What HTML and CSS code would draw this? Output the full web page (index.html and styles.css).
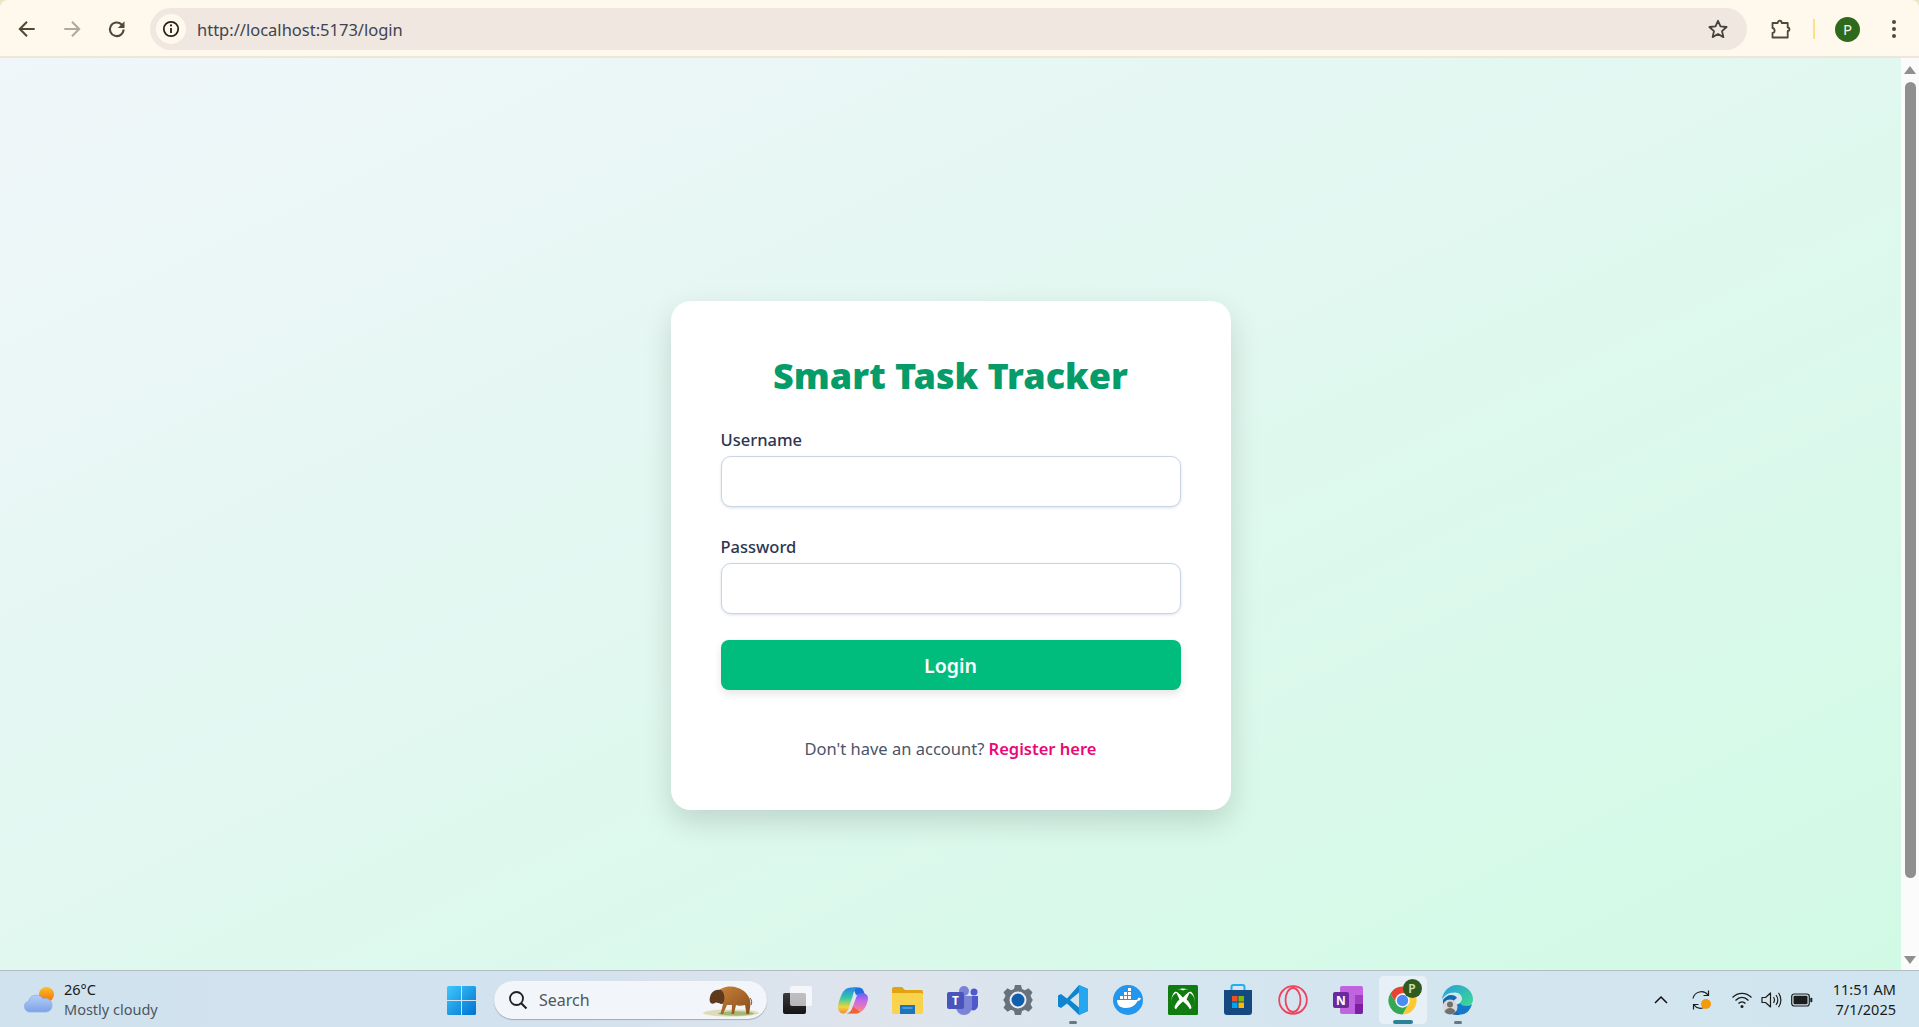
FILE: index.html
```html
<!DOCTYPE html>
<html>
<head>
<title>Smart Task Tracker</title>
<meta charset="utf-8">
<link rel="stylesheet" href="styles.css">
</head>
<body>

<!-- barra del navegador -->
<div class="chrome">
	<div class="nav">
		<svg class="nav-icon" viewBox="0 0 20 20"><path d="M17 10H4M10 3.500 3.500 10l6.500 6.500" fill="none" stroke="#4f4a38" stroke-width="1.900"/></svg>
		<svg class="nav-icon" viewBox="0 0 20 20"><path d="M3 10h13M10 3.500l6.500 6.500-6.500 6.500" fill="none" stroke="#aeaa9c" stroke-width="1.900"/></svg>
		<svg class="nav-icon" viewBox="0 0 20 20"><path d="M16 10.500a6.200 6.200 0 1 1-1.800-4.600L16 7.600" fill="none" stroke="#4f4a38" stroke-width="1.900"/><path d="M16.800 3v6h-6z" fill="#4f4a38"/></svg>
	</div>
	<div class="omnibox">
		<span class="site-chip">
			<svg width="18" height="18" viewBox="0 0 18 18"><circle cx="9" cy="9" r="7.200" fill="none" stroke="#22201a" stroke-width="1.700"/><path d="M9 8v5" stroke="#22201a" stroke-width="1.800"/><circle cx="9" cy="5.400" r="1.100" fill="#22201a"/></svg>
		</span>
		<span class="url">http://localhost:5173/login</span>
		<svg class="star" width="22" height="22" viewBox="0 0 22 22"><path d="M11 2.800l2.500 5.600 6.100.6-4.600 4.100 1.400 6-5.400-3.100-5.400 3.100 1.400-6L2.400 9l6.100-.6z" fill="none" stroke="#45413a" stroke-width="1.800" stroke-linejoin="round"/></svg>
	</div>
	<div class="toolbar">
		<svg width="22" height="22" viewBox="0 0 22 22"><path d="M2.500 5h5.200c0-3 4-3 4 0h6v4.500c2.300 0 2.300 3.500 0 3.500v6.500H2.500v-4.700c2.800 0 2.800-4.800 0-4.800z" fill="none" stroke="#4f4a38" stroke-width="1.800" stroke-linejoin="round"/></svg>
		<span class="toolbar-sep"></span>
		<span class="avatar">P</span>
		<span class="dots"><i></i><i></i><i></i></span>
	</div>
</div>

<div class="viewport">
	<div class="page">
		<div class="card">
			<h1>Smart Task Tracker</h1>
			<form>
				<label for="username">Username</label>
				<input id="username" type="text">
				<label for="password">Password</label>
				<input id="password" class="last-input" type="password">
				<button type="button">Login</button>
			</form>
			<p class="switch">Don't have an account? <a href="#">Register here</a></p>
		</div>
	</div>
	<div class="scrollbar">
		<span class="arrow-up"></span>
		<span class="thumb"></span>
		<span class="arrow-down"></span>
	</div>
</div>

<!-- barra de tareas -->
<div class="taskbar">
	<div class="weather">
		<svg width="32" height="26" viewBox="0 0 32 26">
			<defs>
				<linearGradient id="cloud" x1="0" y1="0" x2="0" y2="1"><stop offset="0" stop-color="#b5cdf5"/><stop offset="1" stop-color="#7ba3e8"/></linearGradient>
				<linearGradient id="sun" x1="0" y1="0" x2="0" y2="1"><stop offset="0" stop-color="#fbbf24"/><stop offset="1" stop-color="#f56f0c"/></linearGradient>
			</defs>
			<circle cx="22.500" cy="7.500" r="7.500" fill="url(#sun)"/>
			<path d="M6 25a5.500 5.500 0 0 1-1.500-10.800A8 8 0 0 1 19 12a6.500 6.500 0 0 1 9 6v1a6 6 0 0 1-6 6z" fill="url(#cloud)" stroke="#8fb0ea" stroke-width=".8"/>
		</svg>
		<div class="weather-text">
			<span class="temp">26°C</span>
			<span class="sky">Mostly cloudy</span>
		</div>
	</div>

	<div class="apps">
		<span class="app">
			<svg width="29" height="29" viewBox="0 0 29 29"><defs><linearGradient id="w11" x1="0" y1="0" x2="1" y2="1"><stop offset="0" stop-color="#3fc8fb"/><stop offset="1" stop-color="#0071d1"/></linearGradient></defs><path d="M0 1.500A1.500 1.500 0 0 1 1.500 0H14v14H0zM15 0h12.500A1.500 1.500 0 0 1 29 1.500V14H15zM0 15h14v14H1.500A1.500 1.500 0 0 1 0 27.500zM15 15h14v12.500a1.500 1.500 0 0 1-1.500 1.500H15z" fill="url(#w11)"/></svg>
		</span>
		<div class="search">
			<svg width="20" height="20" viewBox="0 0 20 20"><circle cx="8.500" cy="8.500" r="6.500" fill="none" stroke="#1c2024" stroke-width="1.800"/><path d="M13.200 13.200 18.500 18.500" stroke="#1c2024" stroke-width="2"/></svg>
			<span class="search-text">Search</span>
			<svg class="bison" width="62" height="34" viewBox="3 1 62 34">
				<defs><linearGradient id="hide" x1="0" y1="0" x2="1" y2="1"><stop offset="0" stop-color="#c98338"/><stop offset="1" stop-color="#8a4d1e"/></linearGradient></defs>
				<ellipse cx="31" cy="31" rx="28" ry="3.500" fill="#dedcb8"/>
				<ellipse cx="36" cy="31.500" rx="18" ry="2.200" fill="#a3b674"/>
				<path d="M17 11C20 5 30 3 38 6c6 2 10 6 12 12 1 4 0 8-1 14h-2.500L45 23c-3 1-7 1-9 0l-2 9h-2.500l.5-9h-5l-4 9h-2.500L23 22l-6-2z" fill="url(#hide)"/>
				<path d="M50 16c2 2 2 5 1 7" fill="none" stroke="#7a4a20" stroke-width="1"/>
				<path d="M11 12c2-4 7-5 10-4 3 2 4 7 3 11-1 3-3 4-5 2-2 0-3-1-4 0-2 1-4 1-5-1-1-3 0-5 1-8z" fill="#5f3a1c"/>
			</svg>
		</div>
		<span class="app">
			<svg width="29" height="28" viewBox="0 0 29 28"><defs><linearGradient id="tv" x1="0" y1="0" x2="0" y2="1"><stop offset="0" stop-color="#3b3b3b"/><stop offset="1" stop-color="#141414"/></linearGradient></defs><rect x="0" y="7" width="23" height="21" rx="2" fill="url(#tv)"/><rect x="7" y="0" width="22" height="20" rx="2" fill="#fff" opacity=".68"/></svg>
		</span>
		<span class="app">
			<svg width="30" height="27" viewBox="0 0 30 27"><defs><linearGradient id="cop1" x1="0" y1="0" x2="0" y2="1"><stop offset="0" stop-color="#2a86e8"/><stop offset=".4" stop-color="#33c9a6"/><stop offset=".75" stop-color="#f2d53c"/><stop offset="1" stop-color="#f58a2e"/></linearGradient><linearGradient id="cop2" x1="0" y1="0" x2="0" y2="1"><stop offset="0" stop-color="#6a5cf0"/><stop offset=".4" stop-color="#c66be8"/><stop offset=".75" stop-color="#f27aa6"/><stop offset="1" stop-color="#f7a84a"/></linearGradient></defs><path d="M15 .5h6c3 0 4.500 2 5.500 6L18 8z" fill="#1c6fe0"/><path d="M13 .5h8c-4 0-5 3.500-6 7.500l-4 12c-1 4-3 6.500-6 6.500s-5-3-5-6.500c0-3 1-6 3-11C5 4 8 .5 13 .5z" fill="url(#cop1)"/><path d="M17 26.500H9c4 0 5-4 6-7.500l3-8c1-3 2-5 6-5 3 0 6 2 6 5 0 4-3 15.500-13 15.500z" fill="url(#cop2)"/><path d="M8 26.500h9c2 0 4-.5 5-1.500l-7-5.500c-1 3-3 7-7 7z" fill="#f0603c"/></svg>
		</span>
		<span class="app">
			<svg width="31" height="28" viewBox="0 0 31 28"><path d="M0 3a2 2 0 0 1 2-2h8l3 3h16a2 2 0 0 1 2 2v6H0z" fill="#e0a412"/><path d="M0 7h29a2 2 0 0 1 2 2v17a2 2 0 0 1-2 2H2a2 2 0 0 1-2-2z" fill="#fad34e"/><path d="M8 19h15v9H8z" fill="#1a75bd"/><path d="M10.500 22h10" stroke="#7cc0ec" stroke-width="1"/></svg>
		</span>
		<span class="app">
			<svg width="32" height="30" viewBox="0 0 32 30"><circle cx="17" cy="6" r="5" fill="#7b83d6"/><circle cx="27" cy="7" r="3.500" fill="#5059c9"/><path d="M20 11h11v10a5 5 0 0 1-7 4z" fill="#5059c9"/><path d="M9 11h16v11a8 8 0 0 1-16 0z" fill="#7b83d6"/><rect x="0" y="7" width="17" height="17" rx="2" fill="#4b53bc"/><text x="8.500" y="20" class="tile-letter" text-anchor="middle">T</text></svg>
		</span>
		<span class="app">
			<svg width="30" height="30" viewBox="0 0 30 30"><path d="M12 0h6l1 4 3 1.300 3.500-2 4 4-2 3.500L29 14l1 1-1 1-1.500 3.200 2 3.500-4 4-3.500-2L19 26l-1 4h-6l-1-4-3-1.300-3.500 2-4-4 2-3.500L1 16l-1-1 1-1 1.500-3.200-2-3.500 4-4 3.500 2L11 4z" fill="#68727c"/><circle cx="15" cy="15" r="8.500" fill="#e8edf2"/><circle cx="15" cy="15" r="6.500" fill="#0f5fae"/></svg>
		</span>
		<span class="app">
			<svg width="30" height="30" viewBox="0 0 30 30"><path d="M21 0l9 4v22l-9 4-12-11.500-6 4.500-3-1.500v-11L3 9l6 4.500z" fill="#0e85cf"/><path d="M21 7.500 12 15l9 7.500z" fill="#d3e3ee"/><path d="M21 0l9 4v22l-9 4z" fill="#27a6f0"/></svg>
			<span class="run-dot"></span>
		</span>
		<span class="app">
			<svg width="30" height="30" viewBox="0 0 30 30"><circle cx="15" cy="15" r="15" fill="#2396ed"/><path d="M4 15h19c1.500 0 2-1 2-2 1.500-.5 2.500 0 3 .8-1 1.700-2 2.200-3.500 2.200-2 4-5.500 7-11.500 7-5 0-9-2-9-8z" fill="#fff"/><path d="M7 11h3v3H7zm4 0h3v3h-3zm4 0h3v3h-3zm-4-4h3v3h-3zm4 0h3v3h-3zm0-4h3v3h-3z" fill="#fff"/></svg>
		</span>
		<span class="app">
			<svg width="30" height="30" viewBox="0 0 30 30"><rect width="30" height="30" rx="1.500" fill="#107c10"/><circle cx="15" cy="15" r="11.500" fill="#fff"/><path d="M15 12.500C12 9.500 9.500 6.500 7 6.500c-.5 0-1 .2-1.500.5C9 3.500 11.500 3.500 15 5.500c3.500-2 6-2 9.500 1.500-.5-.3-1-.5-1.500-.5-2.500 0-5 3-8 6zM8.500 8C5.500 9 2 14 3.500 18c1 2.500 2 4 3 5 .5-4 4-8 5-8.500zM21.500 8c3 1 6.500 6 5 10-1 2.500-2 4-3 5-.5-4-4-8-5-8.500zM15 16.500c-2 1.500-7 6.500-7 8.500 2 1.500 4.500 2 7 2s5-.5 7-2c0-2-5-7-7-8.500z" fill="#107c10"/></svg>
		</span>
		<span class="app">
			<svg width="30" height="32" viewBox="0 0 30 32"><path d="M8.500 7V3a2 2 0 0 1 2-2h9a2 2 0 0 1 2 2v4" fill="none" stroke="#1fb0ee" stroke-width="2"/><path d="M1 6h28v22a3 3 0 0 1-3 3H4a3 3 0 0 1-3-3z" fill="#154a80"/><rect x="9" y="12" width="5.500" height="5.500" fill="#f25022"/><rect x="15.500" y="12" width="5.500" height="5.500" fill="#7fba00"/><rect x="9" y="18.500" width="5.500" height="5.500" fill="#00a4ef"/><rect x="15.500" y="18.500" width="5.500" height="5.500" fill="#ffb900"/></svg>
		</span>
		<span class="app">
			<svg width="30" height="30" viewBox="0 0 30 30"><circle cx="15" cy="15" r="13.800" fill="none" stroke="#f0425f" stroke-width="1.800"/><ellipse cx="15" cy="15" rx="7.500" ry="12" fill="none" stroke="#f0425f" stroke-width="1.800"/></svg>
		</span>
		<span class="app">
			<svg width="30" height="28" viewBox="0 0 30 28"><path d="M7 2a2 2 0 0 1 2-2h19a2 2 0 0 1 2 2v24a2 2 0 0 1-2 2H9a2 2 0 0 1-2-2z" fill="#c064e0"/><path d="M22 9h8v9h-8z" fill="#a13fc0"/><path d="M22 18h8v8a2 2 0 0 1-2 2h-6z" fill="#7b1fa2"/><rect x="0" y="6" width="16" height="16" rx="2" fill="#6a2a9e"/><text x="8" y="18.500" class="tile-letter" text-anchor="middle">N</text></svg>
		</span>
		<span class="app app-active">
			<svg width="31" height="31" viewBox="0 0 32 32"><path d="M3.440 8.750A14.500 14.500 0 0 1 28.560 8.750H16L10 19.500z" fill="#e94335"/><path d="M28.560 8.750A14.500 14.500 0 0 1 16 30.500L22.200 19.600 16 8.750z" fill="#fcc934"/><path d="M16 30.500A14.500 14.500 0 0 1 3.440 8.750L10 19.500H22.200z" fill="#34a853"/><circle cx="16" cy="16" r="7.400" fill="#fff"/><circle cx="16" cy="16" r="5.900" fill="#4b8df5"/></svg>
			<span class="app-badge">P</span>
			<span class="run-bar"></span>
		</span>
		<span class="app">
			<svg width="31" height="31" viewBox="0 0 31 31"><defs><linearGradient id="edge1" x1="0" y1="0" x2="1" y2="1"><stop offset="0" stop-color="#2a9ce0"/><stop offset="1" stop-color="#3bdc8c"/></linearGradient></defs><path d="M15 0c9 0 16 6.500 16 14.500 0 4-3 6.500-7 6.500-3.500 0-6-1.500-6-3 0-1 2-1.500 2-4.500 0-3-3-6-7-6C6 7.500 1.500 11 0 15 .5 7 6.500 0 15 0z" fill="url(#edge1)"/><path d="M1 15c2-3 5-5 8-5 3 0 5 1 6 3-2 1-4 3-4 6 0 4 3 8 8 10-1 .5-2 1-4 1C6 30 0 23 1 15z" fill="#0f6ab4"/><path d="M18 18c1 2 3.500 3 6 3 2.500 0 4.500-.8 6-2-1.500 6-6 11-12 10.500-4-1.500-6.500-5-6.500-9 0-.5 0-1 .1-1.500 1.400 1 4 .7 6.400-1z" fill="#1379c8"/><circle cx="8" cy="22" r="7.500" fill="#d8d8d8"/><circle cx="8" cy="19.500" r="3" fill="#707070"/><path d="M2.500 27c1-3 3-4 5.500-4s4.500 1 5.500 4a7.500 7.500 0 0 1-11 0z" fill="#707070"/></svg>
			<span class="run-dot"></span>
		</span>
	</div>

	<div class="tray">
		<svg class="tray-caret" width="14" height="14" viewBox="0 0 14 14"><path d="M1 10l6-6 6 6" fill="none" stroke="#111" stroke-width="1.500"/></svg>
		<span class="tray-sync">
			<svg width="22" height="22" viewBox="0 0 22 22"><path d="M3 9.500A8.500 8.500 0 0 1 18 6M19 12.500A8.500 8.500 0 0 1 4 16" fill="none" stroke="#1c1c1c" stroke-width="1.200"/><path d="M18.500 1.500V6.500H13.500M3.500 20.500V15.500H8.500" fill="none" stroke="#1c1c1c" stroke-width="1.200"/></svg>
			<i></i>
		</span>
		<svg class="tray-icon" width="22" height="18" viewBox="0 0 22 18"><path d="M1.500 6.500c5.500-5.500 13.500-5.500 19 0M4.500 9.500c4-4 9-4 13 0M7.500 12.500c2-2 5-2 7 0" fill="none" stroke="#1c1c1c" stroke-width="1.300"/><circle cx="11" cy="15.500" r="1.500" fill="#1c1c1c"/></svg>
		<svg class="tray-icon" width="22" height="18" viewBox="0 0 22 18"><path d="M1 6.500h3.500L9.500 2v14L4.500 11.500H1z" fill="none" stroke="#1c1c1c" stroke-width="1.200" stroke-linejoin="round"/><path d="M12.500 6c1.200 1.800 1.200 4.200 0 6M15 4c2.200 3 2.200 7 0 10M17.500 1.800c3.200 4.300 3.200 10.100 0 14.400" fill="none" stroke="#1c1c1c" stroke-width="1.200"/></svg>
		<svg class="tray-icon" width="22" height="14" viewBox="0 0 22 14"><rect x=".7" y="1" width="17.600" height="12" rx="2.500" fill="none" stroke="#1c1c1c" stroke-width="1.200"/><rect x="2.500" y="2.800" width="14" height="8.400" rx="1" fill="#1c1c1c"/><rect x="19.300" y="4.800" width="2" height="4.400" rx=".8" fill="#1c1c1c"/></svg>
		<div class="clock">
			<span>11:51 AM</span>
			<span>7/1/2025</span>
		</div>
	</div>
</div>

</body>
</html>
```

FILE: styles.css
```css
* {
	box-sizing: border-box;
}

html, body {
	height: 100%;
}

body {
	margin: 0;
	display: flex;
	flex-direction: column;
	overflow: hidden;
	background: #efe4c6;
	font-family: "Noto Sans", "Open Sans", sans-serif;
}

/* navegador */
.chrome {
	flex: none;
	height: 58px;
	display: flex;
	align-items: center;
	padding-top: 2px;
	background: #fff8ec;
	border-bottom: 2px solid #efe6d6;
	border-radius: 8px 8px 0 0;
}

.nav {
	width: 150px;
	flex: none;
	display: flex;
	padding-left: 16px;
	gap: 23px;
}

.nav-icon {
	width: 22px;
	height: 22px;
}

.omnibox {
	width: 1597px;
	height: 42px;
	flex: none;
	display: flex;
	align-items: center;
	background: #efe7e0;
	border-radius: 21px;
	padding: 0 18px 0 6px;
}

.site-chip {
	width: 30px;
	height: 30px;
	flex: none;
	display: flex;
	align-items: center;
	justify-content: center;
	border-radius: 50%;
	background: #fff8ec;
}

.url {
	margin-left: 11px;
	font-size: 16.500px;
	color: #3e4450;
}

.star {
	margin-left: auto;
}

.toolbar {
	flex: 1;
	display: flex;
	align-items: center;
	padding-left: 23px;
}

.toolbar-sep {
	width: 2px;
	height: 20px;
	margin-left: 21px;
	background: #fde08a;
}

.avatar {
	width: 25px;
	height: 25px;
	margin-left: 20px;
	display: flex;
	align-items: center;
	justify-content: center;
	border-radius: 50%;
	background: #2f6a1c;
	color: #f2f5ea;
	font-size: 15px;
}

.dots {
	margin-left: 32px;
	display: flex;
	flex-direction: column;
	gap: 3px;
}

.dots i {
	width: 4px;
	height: 4px;
	border-radius: 50%;
	background: #4f4a38;
}

/* pagina */
.viewport {
	flex: 1;
	min-height: 0;
	display: flex;
}

.page {
	flex: 1;
	display: flex;
	justify-content: center;
	padding-top: 243px;
	background: linear-gradient(to bottom right, #f0f6fa 0%, #d1fae5 100%);
}

.card {
	width: 560px;
	height: 509px;
	padding: 50px;
	background: #fff;
	border-radius: 20px;
	box-shadow: 0 12px 30px rgba(0, 0, 0, 0.14);
}

h1 {
	margin: 0 0 27px;
	text-align: center;
	font-size: 36px;
	line-height: 50px;
	font-weight: 900;
	color: #059c69;
}

label {
	display: block;
	height: 24px;
	margin-bottom: 4px;
	font-size: 16.500px;
	line-height: 24px;
	font-weight: 500;
	color: #2d3650;
}

input {
	display: block;
	width: 100%;
	height: 51px;
	margin-bottom: 28px;
	border: 1.500px solid #c9d4e5;
	border-radius: 10px;
	background: #fff;
	box-shadow: 0 1px 3px rgba(40, 60, 110, 0.16);
}

.last-input {
	margin-bottom: 26px;
}

button {
	display: block;
	width: 100%;
	height: 50px;
	border: 0;
	border-radius: 8px;
	background: #00bd7e;
	color: #fff;
	font-family: inherit;
	font-size: 19.500px;
	font-weight: 600;
	box-shadow: 0 4px 8px rgba(0, 0, 0, 0.1);
}

.switch {
	margin: 47px 0 0;
	text-align: center;
	font-size: 16.500px;
	line-height: 24px;
	color: #4a5568;
}

.switch a {
	color: #ec0676;
	font-weight: 600;
	text-decoration: none;
}

/* barra de scroll */
.scrollbar {
	width: 18px;
	flex: none;
	display: flex;
	flex-direction: column;
	align-items: center;
	background: #fbfbfb;
	padding: 8px 0 6px;
}

.arrow-up, .arrow-down {
	width: 0;
	height: 0;
	border-left: 6px solid transparent;
	border-right: 6px solid transparent;
}

.arrow-up {
	border-bottom: 8px solid #8f8f8f;
}

.arrow-down {
	border-top: 8px solid #8f8f8f;
}

.thumb {
	width: 11px;
	height: 796px;
	margin: 8px 0 auto;
	border-radius: 6px;
	background: #8f8f8f;
}

/* barra de tareas */
.taskbar {
	flex: none;
	height: 57px;
	display: flex;
	align-items: center;
	padding-top: 2px;
	border-top: 1px solid #b4bcc3;
	background: linear-gradient(90deg, #d0e2ee 0%, #d3e2ee 30%, #dfe4ec 45%, #d6e5ef 60%, #d0e5f0 100%);
}

.weather {
	width: 434px;
	flex: none;
	display: flex;
	align-items: center;
	padding-left: 24px;
	gap: 8px;
}

.weather-text {
	display: flex;
	flex-direction: column;
	margin-bottom: 2px;
	font-size: 14.500px;
	line-height: 20px;
}

.temp {
	color: #1a1a1a;
}

.sky {
	color: #4b5661;
}

.apps {
	display: flex;
	align-items: center;
}

.app {
	position: relative;
	width: 55px;
	height: 48px;
	flex: none;
	display: flex;
	align-items: center;
	justify-content: center;
}

.app-active {
	width: 48px;
	margin: 0 3.500px;
	background: #e6f0f6;
	border-radius: 5px;
}

.tile-letter {
	font-family: "Noto Sans", sans-serif;
	font-size: 12px;
	font-weight: 700;
	fill: #fff;
}

.app-badge {
	position: absolute;
	top: 3px;
	right: 5px;
	width: 19px;
	height: 19px;
	display: flex;
	align-items: center;
	justify-content: center;
	border-radius: 50%;
	background: #2f5c1e;
	color: #cfe0b8;
	font-size: 12px;
	font-weight: 600;
}

.run-dot {
	position: absolute;
	bottom: 0;
	left: 24px;
	width: 8px;
	height: 3px;
	border-radius: 2px;
	background: #6a7680;
}

.run-bar {
	position: absolute;
	bottom: 0;
	left: 14px;
	width: 20px;
	height: 4px;
	border-radius: 2px;
	background: #2a8496;
}

.search {
	width: 273px;
	height: 38px;
	flex: none;
	margin: 0 3px 0 5px;
	display: flex;
	align-items: center;
	padding: 0 2px 0 14px;
	background: #f2f5f9;
	border-radius: 19px;
	box-shadow: 0 1px 1px rgba(0, 0, 0, 0.25);
}

.search-text {
	margin-left: 11px;
	font-size: 16px;
	color: #50565c;
}

.bison {
	margin-left: auto;
}

.tray {
	flex: 1;
	display: flex;
	align-items: center;
	justify-content: flex-end;
	padding-right: 23px;
}

.tray-caret {
	margin-right: 22px;
}

.tray-sync {
	position: relative;
	display: flex;
	margin-right: 19px;
}

.tray-sync i {
	position: absolute;
	left: 11px;
	top: 10px;
	width: 10px;
	height: 10px;
	border-radius: 50%;
	background: #f59a0b;
}

.tray-icon {
	margin-right: 8px;
}

.clock {
	width: 75px;
	margin-bottom: 2px;
	display: flex;
	flex-direction: column;
	align-items: flex-end;
	font-size: 14.500px;
	line-height: 20px;
	color: #1a1a1a;
}
```
